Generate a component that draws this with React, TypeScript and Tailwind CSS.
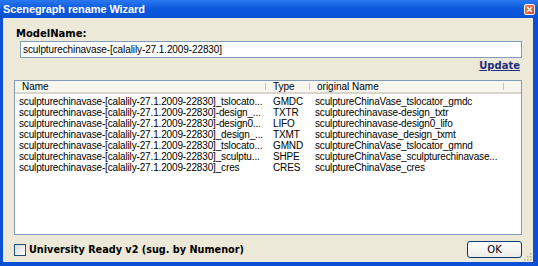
import React from "react";

const rows = [
  ["sculpturechinavase-[calalily-27.1.2009-22830]_tslocato...", "GMDC", "sculptureChinaVase_tslocator_gmdc"],
  ["sculpturechinavase-[calalily-27.1.2009-22830]-design_...", "TXTR", "sculpturechinavase-design_txtr"],
  ["sculpturechinavase-[calalily-27.1.2009-22830]-design0...", "LIFO", "sculpturechinavase-design0_lifo"],
  ["sculpturechinavase-[calalily-27.1.2009-22830]_design_...", "TXMT", "sculpturechinavase_design_txmt"],
  ["sculpturechinavase-[calalily-27.1.2009-22830]_tslocato...", "GMND", "sculptureChinaVase_tslocator_gmnd"],
  ["sculpturechinavase-[calalily-27.1.2009-22830]_sculptu...", "SHPE", "sculptureChinaVase_sculpturechinavase..."],
  ["sculpturechinavase-[calalily-27.1.2009-22830]_cres", "CRES", "sculptureChinaVase_cres"],
];

export default function App() {
  return (
    <div className="w-[538px] h-[266px] bg-[#0a4fd6] flex flex-col overflow-hidden" style={{ fontFamily: '"Liberation Sans", Arial, sans-serif' }}>
      {/* title bar */}
      <div className="h-[18px] flex items-center justify-between pl-[3px] pr-[3px] bg-gradient-to-b from-[#2a78f0] via-[#0b58dc] to-[#0a52d4]">
        <span className="text-white font-bold text-[11px] leading-none tracking-[-0.1px]">Scenegraph rename Wizard</span>
        <div className="w-[11px] h-[11px] rounded-[2px] border border-white bg-gradient-to-br from-[#f08060] to-[#d0401c] flex items-center justify-center">
          <svg width="7" height="7" viewBox="0 0 7 7">
            <path d="M1 1 L6 6 M6 1 L1 6" stroke="white" strokeWidth="1.5" />
          </svg>
        </div>
      </div>
      {/* body */}
      <div className="flex-1 ml-[3px] mr-[5px] mb-[4px] bg-[#ece9d8] flex flex-col relative">
        <div className="pl-[13px] pt-[10px] text-[10px] leading-[12px] font-bold text-black" style={{ fontFamily: '"DejaVu Sans", Verdana, sans-serif' }}>ModelName:</div>
        <div className="ml-[17px] mr-[11px] mt-[1px] h-[17px] bg-white border border-[#7f9db9] flex items-center pl-[2px] text-[10px] text-black tracking-[-0.1px]">
          sculpturechinavase-[calalily-27.1.2009-22830]
        </div>
        <div className="flex justify-end mr-[13px] mt-[2px]">
          <span className="text-[10px] leading-[12px] font-bold underline text-[#1c2c80]" style={{ fontFamily: '"DejaVu Sans", Verdana, sans-serif' }}>Update</span>
        </div>
        <div className="ml-[11px] mr-[11px] mt-[8px] h-[155px] bg-white border border-[#7f9db9] flex flex-col">
          <div className="h-[13px] flex text-[10px] leading-[12px] text-black bg-[#f7f6ef] border-b-2 border-[#d8d6c8]">
            <div className="w-[251px] pl-[7px] border-r border-[#c8c5b4] my-[2px] flex items-center">Name</div>
            <div className="w-[44px] pl-[7px] border-r border-[#c8c5b4] my-[2px] flex items-center">Type</div>
            <div className="w-[194px] pl-[7px] border-r border-[#c8c5b4] my-[2px] flex items-center">original Name</div>
            <div className="flex-1" />
          </div>
          <div className="flex flex-col pt-[2px]">
            {rows.map((r, i) => (
              <div key={i} className="h-[11px] flex text-[10px] leading-[11px] text-black whitespace-nowrap tracking-[-0.15px]">
                <div className="w-[251px] pl-[4px] overflow-hidden">{r[0]}</div>
                <div className="w-[44px] pl-[7px]">{r[1]}</div>
                <div className="pl-[5px]">{r[2]}</div>
              </div>
            ))}
          </div>
        </div>
        <div className="flex items-center justify-between ml-[11px] mr-[11px] mt-[6px]">
          <div className="flex items-center gap-[3px]">
            <div className="w-[12px] h-[12px] border border-[#1c5180] bg-gradient-to-br from-[#dcdcd2] to-[#ffffff]" />
            <span className="text-[9.7px] font-bold text-black leading-[12px]" style={{ fontFamily: '"DejaVu Sans", Verdana, sans-serif' }}>University Ready v2 (sug. by Numenor)</span>
          </div>
          <div className="w-[55px] h-[17px] rounded-[3px] border border-[#003c74] bg-gradient-to-b from-[#ffffff] to-[#ecebe6] flex items-center justify-center text-[10px] text-black" style={{ fontFamily: '"DejaVu Sans", Verdana, sans-serif' }}>
            OK
          </div>
        </div>
        <svg className="absolute right-[1px] bottom-[1px]" width="10" height="10" viewBox="0 0 10 10">
          {[[8, 2], [8, 5], [5, 5], [8, 8], [5, 8], [2, 8]].map(([x, y], i) => (
            <rect key={i} x={x} y={y} width="1.5" height="1.5" fill="#b0ac98" />
          ))}
        </svg>
      </div>
    </div>
  );
}
